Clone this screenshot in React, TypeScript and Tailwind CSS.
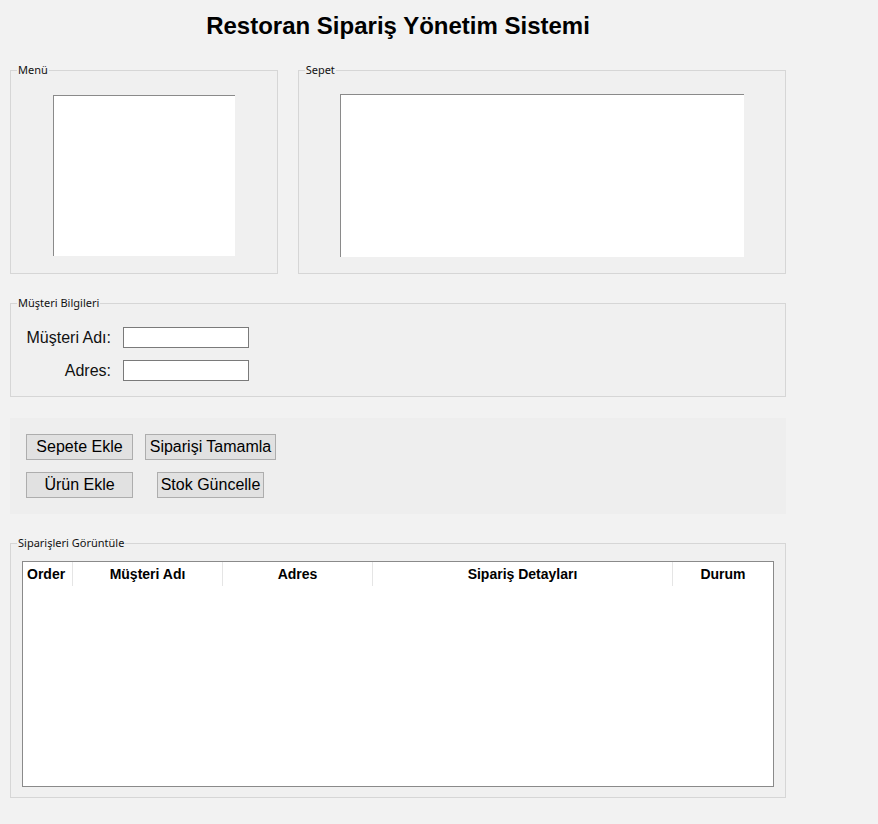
const ui = "font-['Liberation_Sans',Arial,sans-serif]";
const small = "font-['Noto_Sans','Open_Sans',sans-serif]";

function Group({
  title,
  className,
  children,
}: {
  title: string;
  className?: string;
  children: React.ReactNode;
}) {
  return (
    <fieldset className={`border border-[#d6d6d6] bg-[#f0f0f0] px-0 ${className ?? ""}`}>
      <legend className={`ml-[6px] px-[1px] text-[11px] leading-[14px] text-[#111] ${small}`}>
        {title}
      </legend>
      {children}
    </fieldset>
  );
}

function Btn({ label, className }: { label: string; className?: string }) {
  return (
    <button
      className={`h-[26px] border border-[#adadad] bg-[#e1e1e1] text-[16px] leading-none text-black ${ui} ${className ?? ""}`}
    >
      {label}
    </button>
  );
}

const columns = [
  { name: "Order", w: "w-[50px]", align: "text-left pl-[4px]" },
  { name: "Müşteri Adı", w: "w-[150px]", align: "text-center" },
  { name: "Adres", w: "w-[150px]", align: "text-center" },
  { name: "Sipariş Detayları", w: "w-[300px]", align: "text-center" },
  { name: "Durum", w: "w-[100px]", align: "text-center" },
];

export default function App() {
  return (
    <div className={`min-h-[824px] w-full bg-[#f2f2f2] ${ui}`}>
      <div className="flex w-[796px] flex-col px-[10px]">
        {/* Title */}
        <h1 className="mt-[12px] text-center text-[24px] font-bold leading-[28px] text-black">
          Restoran Sipariş Yönetim Sistemi
        </h1>

        {/* Menu + Sepet */}
        <div className="mt-[23px] flex gap-[20px]">
          <Group title="Menü" className="w-[268px]">
            <div className="mt-[18px] mb-[17px] ml-[42px] h-[161px] w-[182px] border-t border-l border-[#8a8a8a] bg-white" />
          </Group>
          <Group title="Sepet" className="w-[489px]">
            <div className="mt-[17px] mb-[16px] ml-[41px] h-[163px] w-[404px] border-t border-l border-[#8a8a8a] bg-white" />
          </Group>
        </div>

        {/* Customer */}
        <Group title="Müşteri Bilgileri" className="mt-[22px]">
          <div className="mt-[17px] mb-[15px] grid grid-cols-[100px_126px] items-center gap-x-[12px] gap-y-[12px]">
            <label className="text-right text-[16px] leading-[21px] text-[#111]">Müşteri Adı:</label>
            <input className="h-[21px] w-[126px] border border-[#7a7a7a] bg-white" />
            <label className="text-right text-[16px] leading-[21px] text-[#111]">Adres:</label>
            <input className="h-[21px] w-[126px] border border-[#7a7a7a] bg-white" />
          </div>
        </Group>

        {/* Buttons */}
        <div className="mt-[21px] flex h-[96px] flex-col gap-[12px] bg-[#eeeeee] pt-[16px] pl-[16px]">
          <div className="flex gap-[12px]">
            <Btn label="Sepete Ekle" className="w-[107px]" />
            <Btn label="Siparişi Tamamla" className="w-[131px]" />
          </div>
          <div className="flex gap-[24px]">
            <Btn label="Ürün Ekle" className="w-[107px]" />
            <Btn label="Stok Güncelle" className="w-[107px]" />
          </div>
        </div>

        {/* Orders */}
        <Group title="Siparişleri Görüntüle" className="mt-[22px]">
          <div className="mt-[11px] mb-[10px] ml-[11px] h-[226px] w-[752px] border border-[#8a8a8a] bg-white">
            <div className="flex h-[24px]">
              {columns.map((c, i) => (
                <div
                  key={c.name}
                  className={`${c.w} ${c.align} text-[14px] font-bold leading-[24px] text-black ${
                    i < columns.length - 1 ? "border-r border-[#e5e5e5]" : ""
                  }`}
                >
                  {c.name}
                </div>
              ))}
            </div>
          </div>
        </Group>
      </div>
    </div>
  );
}
